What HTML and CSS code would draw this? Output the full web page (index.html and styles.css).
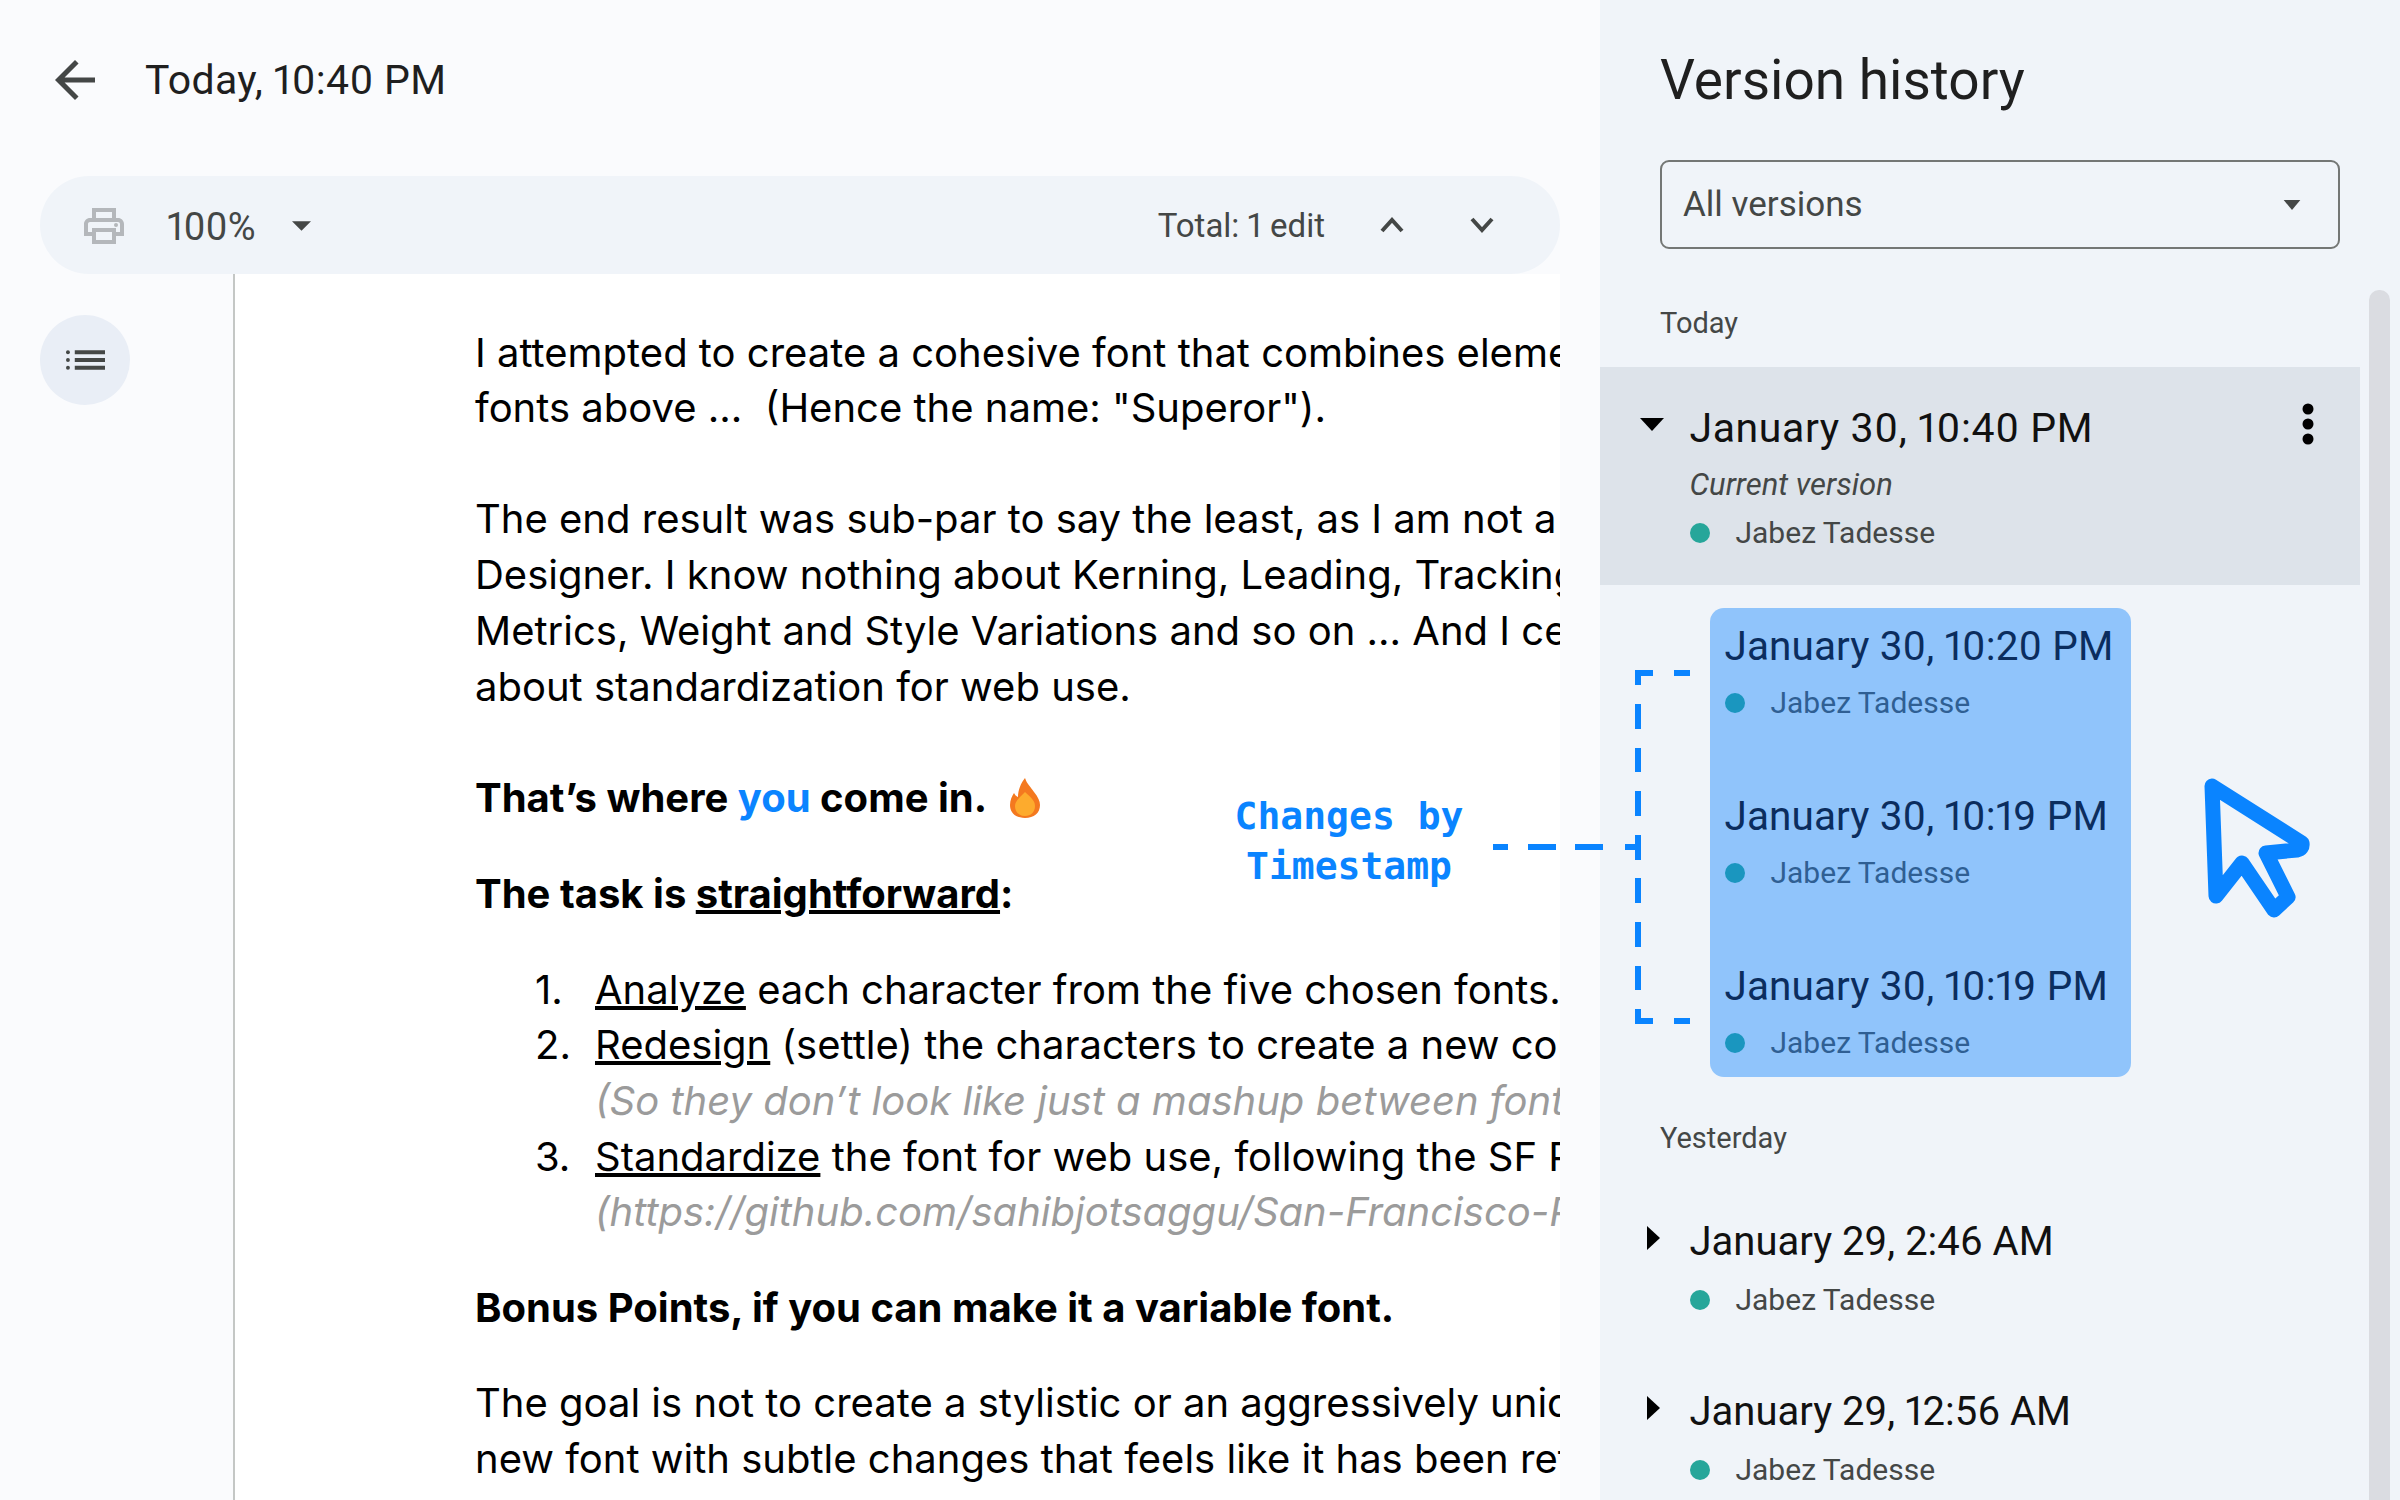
FILE: index.html
```html
<!DOCTYPE html>
<html lang="en">
<head>
  <meta charset="UTF-8">
  <title>Version history</title>
  <link rel="stylesheet" href="styles.css">
</head>
<body>
  <div class="app">
    <div class="main">
      <div class="top-bar">
        <svg class="back-icon" viewBox="0 0 24 24"><path d="M20 11H7.83l5.59-5.59L12 4l-8 8 8 8 1.41-1.41L7.83 13H20v-2z"/></svg>
        <span class="top-title">Today, 10:40 PM</span>
      </div>

      <div class="toolbar">
        <svg class="print-icon" viewBox="0 0 24 24"><path d="M19 8h-1V3H6v5H5c-1.66 0-3 1.34-3 3v6h4v4h12v-4h4v-6c0-1.66-1.34-3-3-3zM8 5h8v3H8V5zm8 12v2H8v-4h8v2zm2-2v-2H6v2H4v-4c0-.55.45-1 1-1h14c.55 0 1 .45 1 1v4h-2z"/><circle cx="18" cy="11.5" r="1"/></svg>
        <span class="zoom-value">100%</span>
        <svg class="tool-caret" viewBox="0 0 20 10"><path d="M0 0h20L10 10z"/></svg>
        <span class="edit-count">Total: 1 edit</span>
        <svg class="chevron chevron-up" viewBox="0 0 24 16"><path d="M2 14 12 3l10 11"/></svg>
        <svg class="chevron chevron-down" viewBox="0 0 24 16"><path d="M2 2l10 11L22 2"/></svg>
      </div>

      <div class="content">
        <div class="rail">
          <div class="outline-button">
            <svg viewBox="0 0 40 24"><path d="M9 2h31v4H9zM9 10h31v4H9zM9 18h31v4H9z"/><circle cx="2" cy="4" r="2"/><circle cx="2" cy="12" r="2"/><circle cx="2" cy="20" r="2"/></svg>
          </div>
        </div>

        <div class="doc">
          <p>I attempted to create a cohesive font that combines elements from the<br>fonts above ...&nbsp; (Hence the name: "Superor").</p>
          <p class="after-blank">The end result was sub-par to say the least, as I am not a Font<br>Designer. I know nothing about Kerning, Leading, Tracking, Font<br>Metrics, Weight and Style Variations and so on ... And I certainly know nothing<br>about standardization for web use.</p>
          <p class="after-blank lead lead-first">That’s where <span class="accent">you</span> come in. <svg class="flame" viewBox="0 0 30 40"><path class="flame-outer" d="M15 0c2 6 5 8 9 14 4 5 6 9 6 13 0 8-6 13-15 13S0 35 0 27c0-5 2-9 4-12 1 2 2 3 4 4C8 12 11 5 15 0z"/><path class="flame-inner" d="M15 14c4 4 10 8 10 14 0 6-4 10-10 10S5 34 5 28c0-5 5-9 10-14z"/></svg></p>
          <p class="lead">The task is <u>straightforward</u>:</p>
          <div class="steps">
            <div class="step"><span class="step-num">1.</span><span><u>Analyze</u> each character from the five chosen fonts.</span></div>
            <div class="step"><span class="step-num">2.</span><span><u>Redesign</u> (settle) the characters to create a new cohesive font.</span></div>
            <div class="step"><span class="step-num"></span><span class="hint">(So they don’t look like just a mashup between fonts)</span></div>
            <div class="step"><span class="step-num">3.</span><span><u>Standardize</u> the font for web use, following the SF Pro specs</span></div>
            <div class="step"><span class="step-num"></span><span class="hint">(https://github.com/sahibjotsaggu/San-Francisco-Pro-Fonts)</span></div>
          </div>
          <p class="lead">Bonus Points, if you can make it a variable font.</p>
          <p>The goal is not to create a stylistic or an aggressively unique font, but a<br>new font with subtle changes that feels like it has been refined over time.</p>
        </div>
      </div>
    </div>

    <div class="panel">
      <h1>Version history</h1>
      <div class="select">
        <span>All versions</span>
        <svg class="select-caret" viewBox="0 0 20 12"><path d="M0 0h20L10 12z"/></svg>
      </div>

      <div class="day-label">Today</div>
      <div class="version version-selected">
        <svg class="row-caret-down" viewBox="0 0 24 13"><path d="M0 0h24L12 13z"/></svg>
        <div class="version-body">
          <div class="version-title">
            <span>January 30, 10:40 PM</span>
            <svg class="kebab" viewBox="0 0 12 42"><circle cx="6" cy="6" r="5.5"/><circle cx="6" cy="21" r="5.5"/><circle cx="6" cy="36" r="5.5"/></svg>
          </div>
          <div class="version-note">Current version</div>
          <div class="author author-tight"><i class="dot"></i>Jabez Tadesse</div>
        </div>
      </div>

      <div class="changes">
        <div>
          <div class="version-title">January 30, 10:20 PM</div>
          <div class="author"><i class="dot"></i>Jabez Tadesse</div>
        </div>
        <div>
          <div class="version-title">January 30, 10:19 PM</div>
          <div class="author"><i class="dot"></i>Jabez Tadesse</div>
        </div>
        <div>
          <div class="version-title">January 30, 10:19 PM</div>
          <div class="author"><i class="dot"></i>Jabez Tadesse</div>
        </div>
      </div>

      <div class="day-label day-yesterday">Yesterday</div>
      <div class="version version-first">
        <svg class="row-caret-right" viewBox="0 0 13 24"><path d="M0 0l13 12L0 24z"/></svg>
        <div class="version-body">
          <div class="version-title">January 29, 2:46 AM</div>
          <div class="author"><i class="dot"></i>Jabez Tadesse</div>
        </div>
      </div>
      <div class="version version-next">
        <svg class="row-caret-right" viewBox="0 0 13 24"><path d="M0 0l13 12L0 24z"/></svg>
        <div class="version-body">
          <div class="version-title">January 29, 12:56 AM</div>
          <div class="author"><i class="dot"></i>Jabez Tadesse</div>
        </div>
      </div>

      <div class="scrollbar"></div>
    </div>

    <!-- annotation drawn on top of the screenshot -->
    <div class="note">Changes by<br>Timestamp</div>
    <svg class="bracket" viewBox="1490 660 200 370">
      <path d="M1690 673h-16M1653 673h-15v12M1638 704v25M1638 748v24M1638 791v25M1638 835v25M1638 878v25M1638 922v25M1638 966v24M1638 1009v12h15M1674 1021h16M1493 847h15M1528 847h28M1575 847h28M1625 847h13"/>
    </svg>
    <svg class="cursor" viewBox="2200 775 112 145">
      <path d="M2212 786 2302 843Q2303 849 2297 850L2266 853 2288 897 2274 910 2242 863 2216 896z"/>
    </svg>
  </div>
</body>
</html>
```
FILE: styles.css
```css
body {
  margin: 0;
  background-color: #fafbfd;
  font-family: 'Roboto', sans-serif;
  font-variant-numeric: proportional-nums;
  color: #1f1f1f;
}

.app {
  position: relative;
  display: flex;
  width: 2400px;
  height: 1500px;
  overflow: hidden;
}

.main {
  display: flex;
  flex-direction: column;
  width: 1600px;
}

.top-bar {
  display: flex;
  align-items: center;
  height: 160px;
  padding-left: 45px;
  box-sizing: border-box;
}

.back-icon {
  width: 60px;
  height: 60px;
  fill: #444746;
}

.top-title {
  margin-left: 40px;
  font-size: 41px;
  letter-spacing: 0.3px;
  color: #1f1f1f;
}

.toolbar {
  display: flex;
  align-items: center;
  height: 98px;
  margin: 16px 40px 0;
  padding-left: 40px;
  border-radius: 49px;
  background-color: #f0f4f9;
}

.print-icon {
  width: 48px;
  height: 48px;
  margin-top: 2px;
  fill: #b4b7bb;
}

.zoom-value {
  margin: 3px 0 0 39px;
  font-size: 38px;
  color: #444746;
}

.tool-caret {
  width: 19px;
  height: 10px;
  margin: 2px 0 0 36px;
  fill: #444746;
}

.edit-count {
  margin-left: auto;
  font-size: 33px;
  color: #444746;
}

.chevron {
  width: 24px;
  height: 16px;
  fill: none;
  stroke: #444746;
  stroke-width: 4;
}

.chevron-up {
  margin-left: 55px;
}

.chevron-down {
  margin-left: 66px;
  margin-right: 66px;
}

.content {
  display: flex;
  flex: 1;
  min-height: 0;
  margin-right: 40px;
}

.rail {
  width: 235px;
  padding: 41px 0 0 40px;
  box-sizing: border-box;
  border-right: 2px solid #c4c7c5;
}

.outline-button {
  display: flex;
  align-items: center;
  justify-content: center;
  width: 90px;
  height: 90px;
  border-radius: 50%;
  background-color: #e9eef6;
}

.outline-button svg {
  width: 39px;
  height: 24px;
  fill: #444746;
}

.doc {
  flex: 1;
  min-width: 0;
  padding: 50.5px 0 0 240px;
  overflow: hidden;
  background-color: white;
  font-family: 'Inter', sans-serif;
  font-size: 40px;
  line-height: 55.7px;
  color: #000;
  white-space: nowrap;
}

.doc p {
  margin: 0 0 39.5px;
}

.doc .after-blank {
  margin-top: 55.5px;
}

.doc .lead-first {
  margin-bottom: 41px;
}

.lead {
  font-weight: 700;
}

.accent {
  color: #0a84ff;
}

.flame {
  width: 30px;
  height: 40px;
  margin-left: 15px;
  vertical-align: -6px;
}

.flame-outer {
  fill: #f4791f;
}

.flame-inner {
  fill: #fdab2d;
}

.steps {
  margin-bottom: 39.5px;
  padding-left: 60px;
}

.step {
  display: flex;
}

.step-num {
  flex: none;
  width: 60px;
}

.hint {
  font-style: italic;
  color: #9b9b9b;
}

.panel {
  position: relative;
  width: 800px;
  background-color: #f0f4f9;
}

.panel h1 {
  margin: 50px 0 0 60px;
  font-size: 55px;
  font-weight: 400;
  line-height: 60px;
  color: #1f1f1f;
}

.select {
  display: flex;
  align-items: center;
  justify-content: space-between;
  width: 680px;
  height: 89px;
  margin: 50px 0 0 60px;
  padding: 0 37px 0 21px;
  box-sizing: border-box;
  border: 2.5px solid #747775;
  border-radius: 9px;
  font-size: 35px;
  color: #444746;
}

.select-caret {
  width: 18px;
  height: 10px;
  fill: #444746;
}

.day-label {
  margin: 54px 0 24px 60px;
  font-size: 29px;
  line-height: 40px;
  color: #444746;
}

.day-yesterday {
  margin-top: 41px;
  margin-bottom: 59px;
}

.version {
  display: flex;
  padding-left: 40px;
}

.version-selected {
  width: 760px;
  padding-top: 35.5px;
  padding-bottom: 30px;
  box-sizing: border-box;
  background-color: #dde3ea;
}

.version-next {
  margin-top: 65px;
}

.row-caret-down {
  flex: none;
  width: 24px;
  height: 13px;
  margin: 15px 25.5px 0 0;
}

.row-caret-right {
  flex: none;
  width: 13px;
  height: 24px;
  margin: 9px 29.5px 0 7px;
}

.version-body {
  flex: 1;
}

.version-title {
  display: flex;
  justify-content: space-between;
  font-size: 40px;
  line-height: 50px;
  color: #111;
}

.version-selected .version-title {
  font-size: 41px;
  letter-spacing: 0.6px;
}

.kebab {
  width: 12px;
  height: 42px;
  margin-right: 46px;
}

.version-note {
  margin-top: 10px;
  font-size: 31px;
  font-style: italic;
  line-height: 44px;
  color: #444746;
}

.author {
  display: flex;
  align-items: center;
  margin-top: 11px;
  font-size: 30px;
  line-height: 44px;
  color: #444746;
}

.author-tight {
  margin-top: 4px;
}

.dot {
  width: 20px;
  height: 20px;
  margin-right: 26px;
  border-radius: 50%;
  background-color: #26a69a;
}

.changes {
  display: flex;
  flex-direction: column;
  gap: 66px;
  width: 421px;
  margin: 23.5px 0 0 109.5px;
  padding: 12.5px 15px 12.5px;
  box-sizing: border-box;
  border-radius: 14px;
  background-color: #90c4fb;
}

.changes .version-title {
  font-size: 40.5px;
  letter-spacing: 0.1px;
  color: #0b2d5e;
}

.changes .author {
  margin-top: 10px;
  color: #2f5f93;
}

.changes .dot {
  background-color: #1a96bf;
}

.scrollbar {
  position: absolute;
  top: 290px;
  bottom: 0;
  left: 769px;
  width: 21px;
  border-radius: 10px 10px 0 0;
  background-color: #dadce1;
}

.note {
  position: absolute;
  left: 1229px;
  top: 791px;
  width: 240px;
  font-family: 'DejaVu Sans Mono', monospace;
  font-size: 38px;
  font-weight: bold;
  line-height: 50px;
  text-align: center;
  color: #0a84ff;
}

.bracket {
  position: absolute;
  left: 1490px;
  top: 660px;
  width: 200px;
  height: 370px;
  fill: none;
  stroke: #0a84ff;
  stroke-width: 6;
}

.cursor {
  position: absolute;
  left: 2200px;
  top: 775px;
  width: 112px;
  height: 145px;
  fill: none;
  stroke: #0a84ff;
  stroke-width: 15;
  stroke-linejoin: round;
}
```
